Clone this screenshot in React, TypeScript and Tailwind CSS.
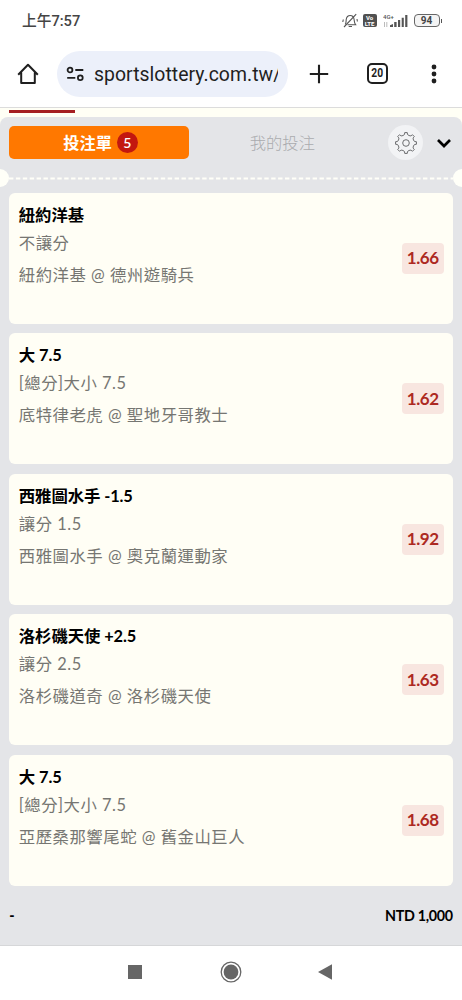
import { ReactNode } from 'react';

interface Bet {
  pick: string;
  market: string;
  match: string;
  odds: string;
}

const bets: Bet[] = [
  { pick: '紐約洋基', market: '不讓分', match: '紐約洋基 @ 德州遊騎兵', odds: '1.66' },
  { pick: '大 7.5', market: '[總分]大小 7.5', match: '底特律老虎 @ 聖地牙哥教士', odds: '1.62' },
  { pick: '西雅圖水手 -1.5', market: '讓分 1.5', match: '西雅圖水手 @ 奧克蘭運動家', odds: '1.92' },
  { pick: '洛杉磯天使 +2.5', market: '讓分 2.5', match: '洛杉磯道奇 @ 洛杉磯天使', odds: '1.63' },
  { pick: '大 7.5', market: '[總分]大小 7.5', match: '亞歷桑那響尾蛇 @ 舊金山巨人', odds: '1.68' },
];

const StatusBar = () => (
  <div className="flex h-10 shrink-0 items-center pl-[22px] pr-[20px] text-[#444]">
    <span className="mt-[2px] font-['Roboto','Noto_Sans_CJK_TC',sans-serif] text-[14.7px] font-medium leading-5">
      上午7:57
    </span>
    <div className="ml-auto mt-px flex items-center">
      <svg width="16" height="16" viewBox="0 0 16 16" fill="none" stroke="#555" strokeWidth="1.1" className="mr-[5px]">
        <path d="M3.2 11.5C4.3 10 4 8.5 4.2 6.5C4.6 3.7 6.2 2.5 8.2 2.5C10.4 2.5 11.8 4 12.1 6.5C12.3 8.7 12.3 10 13.6 11.7H5.5" />
        <path d="M6.7 13.5H10M14.2 1.2L2 14M1.3 6.5L0.8 9M15 6L15.4 8.5" />
      </svg>
      <div className="mr-[6px] flex h-[13px] w-[14px] flex-col items-center justify-center rounded-[2px] bg-[#505050] font-['Roboto',sans-serif] text-[6px] font-bold leading-[5.5px] text-white">
        <span>Vo</span>
        <span>LTE</span>
      </div>
      <svg width="25" height="14" viewBox="0 0 25 14" className="mr-[6px]">
        <text x="0" y="5" fontFamily="Roboto, sans-serif" fontSize="6" fontWeight="500" fill="#555">4G+</text>
        <path d="M1.5 13V8M3.8 8V13" stroke="#aaa" strokeWidth=".8" />
        <path
          d="M7 13V11.2L10 10V13ZM11.2 13V8H13.6V13ZM15 13V6H17.2V13ZM18.7 13V3.7H20.8V13ZM22.2 13V1H24.4V13Z"
          fill="#555"
        />
      </svg>
      <div className="flex h-[13px] w-[26px] items-center justify-center rounded-[4px] border-[1.5px] border-[#666] bg-[#f4f4f4] font-['Roboto',sans-serif] text-[10px] font-bold leading-none">
        94
      </div>
      <div className="ml-px h-1 w-[1.5px] bg-[#555]" />
    </div>
  </div>
);

const BrowserBar = () => (
  <div className="flex h-[68px] shrink-0 items-center border-b border-[#dcdcdc] text-[#1f1f1f]">
    <svg width="22" height="22" viewBox="0 0 22 22" fill="none" stroke="currentColor" strokeWidth="2" strokeLinejoin="round" className="ml-[17px]">
      <path d="M4.2 9.5V20H17.8V9.5M1.2 11.8L11 1.7L20.8 11.8" />
    </svg>
    <div className="ml-[18px] flex h-[46px] w-[231px] items-center rounded-full bg-[#ecf0fa] pl-[9px]">
      <svg width="19" height="16" viewBox="0 0 19 16" fill="none" stroke="currentColor" strokeWidth="1.8">
        <circle cx="4" cy="4" r="2.4" />
        <circle cx="14.3" cy="11.8" r="2.4" />
        <path d="M9.3 4H17.3M1.2 11.8H9.3" />
      </svg>
      <div className="ml-[9px] mt-[3px] w-[184px] overflow-hidden whitespace-nowrap font-['Roboto',sans-serif] text-[19.4px] leading-[28px] tracking-[0.04px]">
        sportslottery.com.tw/
      </div>
    </div>
    <svg width="20" height="20" viewBox="0 0 20 20" stroke="currentColor" strokeWidth="2.1" className="ml-[21px]">
      <path d="M10 .8V19.2M.8 10H19.2" />
    </svg>
    <div className="ml-[38px] flex h-[21px] w-[21px] items-center justify-center rounded-[5px] border-2 border-current font-['Roboto',sans-serif] text-[12.5px] font-bold leading-none">
      <span className="scale-x-[.82]">20</span>
    </div>
    <svg width="6" height="20" viewBox="0 0 6 20" fill="currentColor" className="ml-[43px]">
      <circle cx="3" cy="3" r="2.4" />
      <circle cx="3" cy="10" r="2.4" />
      <circle cx="3" cy="17" r="2.4" />
    </svg>
  </div>
);

// Rounded cog with eight teeth around a centre of 12,12
const GearIcon = () => {
  const points: string[] = [];
  for (let i = 0; i < 8; i++) {
    [[-15, 8.2], [-9.5, 8.9], [-7, 10.5], [7, 10.5], [9.5, 8.9], [15, 8.2]].forEach(([offset, r]) => {
      const a = ((i * 45 + offset - 90) * Math.PI) / 180;
      points.push(`${(12 + r * Math.cos(a)).toFixed(2)} ${(12 + r * Math.sin(a)).toFixed(2)}`);
    });
  }
  return (
    <svg width="24" height="24" viewBox="0 0 24 24" fill="none" stroke="#5c5d60" strokeWidth="0.9" strokeLinejoin="round">
      <path d={`M${points.join('L')}Z`} />
      <circle cx="12" cy="12" r="3.3" />
    </svg>
  );
};

const SlipHeader = () => (
  <div className="flex h-[51px] shrink-0 items-center pl-[9.3px]">
    <div className="flex h-[33.5px] w-[179.5px] items-center justify-center rounded-[5px] bg-[#ff7800] pl-[3px] text-white">
      <span className="text-[16.2px] font-bold leading-6">投注單</span>
      <span className="ml-[5px] flex h-[21px] w-[21px] items-center justify-center rounded-full bg-[#c3170f] text-[14px] font-semibold leading-none">
        5
      </span>
    </div>
    <span className="ml-[61px] text-[16.3px] font-light leading-6 text-[#aaabae]">我的投注</span>
    <div className="ml-auto flex h-[35px] w-[35px] items-center justify-center rounded-full bg-[#f2f3f5]">
      <GearIcon />
    </div>
    <svg width="14" height="9" viewBox="0 0 14 9" fill="none" stroke="#000" strokeWidth="2.7" className="ml-[14px] mr-[11px] mt-[2px]">
      <path d="M1 1L7 7L13 1" />
    </svg>
  </div>
);

const Perforation = () => (
  <div className="flex h-[19px] shrink-0 items-center justify-between overflow-hidden">
    <div className="-ml-[9px] h-[18px] w-[18px] shrink-0 rounded-full bg-[#fffff8]" />
    <svg width="444" height="3" className="mt-[2px]">
      <path d="M0 1.5H444" stroke="#fffff8" strokeWidth="2" strokeDasharray="4.4 2.5" />
    </svg>
    <div className="-mr-[9px] h-[18px] w-[18px] shrink-0 rounded-full bg-[#fffff8]" />
  </div>
);

const Line = ({ children, className }: { children: ReactNode; className: string }) => (
  <div className={`whitespace-nowrap leading-6 ${className}`}>{children}</div>
);

const BetCard = ({ bet }: { bet: Bet }) => (
  <div className="flex h-[131px] items-center rounded-[6px] bg-[#fffef5] pl-[9.5px] pr-[9px]">
    <div className="h-full pt-[10px]">
      <Line className="text-[16.4px] font-bold tracking-[-0.1px] text-black">{bet.pick}</Line>
      <Line className="mt-1 text-[16.4px] tracking-[0.5px] text-[#767672]">{bet.market}</Line>
      <Line className="mt-2 text-[16.4px] tracking-[0.5px] text-[#767672]">{bet.match}</Line>
    </div>
    <div className="ml-auto flex h-[31px] w-[42px] items-center justify-center rounded-[4px] bg-[#f8e6e0] text-[17px] font-bold tracking-[-0.4px] text-[#ad2922]">
      {bet.odds}
    </div>
  </div>
);

const NavBar = () => (
  <div className="flex h-[55px] shrink-0 items-center border-t border-[#d6d7d9] bg-white pb-[2px]">
    <div className="ml-[128px] h-[14px] w-[14px] bg-[#666]" />
    <svg width="22" height="22" viewBox="0 0 22 22" className="ml-[78px]">
      <circle cx="11" cy="11" r="9.8" fill="none" stroke="#666" strokeWidth="1.3" />
      <circle cx="11" cy="11" r="7.4" fill="#666" />
    </svg>
    <svg width="14" height="16" viewBox="0 0 14 16" className="ml-[76px]">
      <path d="M0 8L14 .3V15.7Z" fill="#666" />
    </svg>
  </div>
);

export default function App() {
  return (
    <div className="flex h-[1000px] w-[462px] flex-col overflow-hidden bg-white font-['Lato','Noto_Sans_CJK_TC',sans-serif]" lang="zh-Hant">
      <StatusBar />
      <BrowserBar />
      <div className="flex min-h-0 flex-1 flex-col bg-[#fffff5]">
        <div className="h-[9px] shrink-0 pl-[9px] pt-[2px]">
          <div className="h-[3px] w-[66px] bg-[#a51f22]" />
        </div>
        <div className="flex flex-1 flex-col rounded-t-[8px] bg-[#e4e5e8]">
          <SlipHeader />
          <Perforation />
          <div className="flex flex-col gap-[9.5px] px-[9.3px] pt-[5.7px]">
            {bets.map(bet => (
              <BetCard key={bet.match} bet={bet} />
            ))}
          </div>
          <div className="flex flex-1 items-center justify-between px-[9.3px] text-[14.3px] font-bold text-black">
            <span className="font-black">-</span>
            <span className="tracking-[-0.3px]">NTD 1,000</span>
          </div>
        </div>
      </div>
      <NavBar />
    </div>
  );
}
